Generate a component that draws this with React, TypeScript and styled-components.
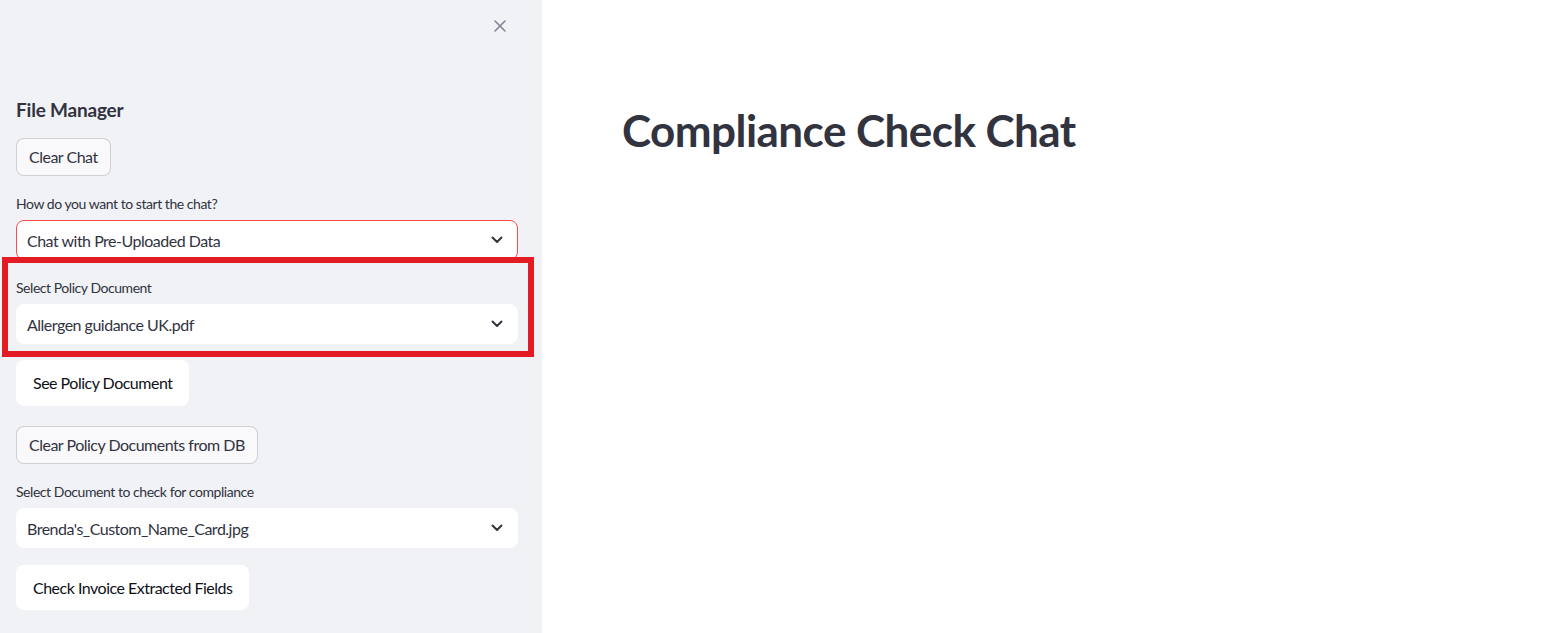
import React from "react";
import styled, { createGlobalStyle } from "styled-components";

const Global = createGlobalStyle`
  html, body { margin: 0; padding: 0; }
  body {
    font-family: Lato, "Noto Sans", sans-serif;
    color: #31333f;
    background: #ffffff;
  }
  * { box-sizing: border-box; }
`;

const Page = styled.div`
  display: flex;
  width: 100%;
  height: 633px;
  overflow: hidden;
`;

const Sidebar = styled.aside`
  position: relative;
  width: 542px;
  flex: 0 0 542px;
  height: 100%;
  background: #f0f2f6;
  display: flex;
  flex-direction: column;
`;

const SidebarHeader = styled.div`
  height: 98px;
  display: flex;
  justify-content: flex-end;
  align-items: flex-start;
  padding: 19px 35px 0 0;
`;

const CloseButton = styled.button`
  width: 14px;
  height: 14px;
  padding: 0;
  border: none;
  background: transparent;
  display: flex;
  align-items: center;
  justify-content: center;
  cursor: pointer;
`;

const SidebarContent = styled.div`
  display: flex;
  flex-direction: column;
  align-items: flex-start;
  gap: 16px;
  padding: 0 24px 0 16px;
`;

const SideHeading = styled.h3`
  margin: 0;
  font-size: 19px;
  font-weight: 700;
  line-height: 24px;
  letter-spacing: -0.2px;
  color: #31333f;
`;

const Button = styled.button<{ $variant?: "outline" | "solid"; $h?: number; $mt?: number }>`
  height: ${(p) => p.$h ?? 38}px;
  margin-top: ${(p) => p.$mt ?? 0}px;
  padding: 0 ${(p) => (p.$variant === "solid" ? 16 : 12)}px;
  border-radius: 8px;
  font-family: inherit;
  font-size: 16px;
  letter-spacing: -0.5px;
  line-height: 1;
  cursor: pointer;
  white-space: nowrap;
  border: ${(p) => (p.$variant === "solid" ? "1px solid transparent" : "1px solid rgba(49, 51, 63, 0.2)")};
  background: ${(p) => (p.$variant === "solid" ? "#ffffff" : "#f9f9fb")};
  color: ${(p) => (p.$variant === "solid" ? "#0e1117" : "#31333f")};
`;

const Field = styled.div`
  width: 100%;
  display: flex;
  flex-direction: column;
`;

const Label = styled.label`
  font-size: 14px;
  line-height: 24px;
  height: 24px;
  margin-bottom: 4px;
  letter-spacing: -0.45px;
  color: #31333f;
`;

const Select = styled.div<{ $focused?: boolean }>`
  width: 100%;
  height: 40px;
  border-radius: 8px;
  background: #ffffff;
  border: 1px solid ${(p) => (p.$focused ? "#ff4b4b" : "#ffffff")};
  display: flex;
  align-items: center;
  justify-content: space-between;
  padding: 0 14px 0 10px;
  font-size: 16px;
  letter-spacing: -0.5px;
  color: #31333f;
`;

const Annotation = styled.div`
  position: absolute;
  left: 2px;
  top: 257px;
  width: 532px;
  height: 100px;
  border: 6px solid #e31c23;
  pointer-events: none;
`;

const Main = styled.main`
  flex: 1;
  background: #ffffff;
  padding: 104px 80px 0 80px;
`;

const Title = styled.h1`
  margin: 0;
  font-size: 44px;
  font-weight: 700;
  line-height: 52px;
  color: #31333f;
  letter-spacing: -0.55px;
`;

const Chevron = () => (
  <svg width="12" height="8" viewBox="0 0 12 8" fill="none">
    <path d="M1.5 1.5 L6 6 L10.5 1.5" stroke="#31333f" strokeWidth="2" strokeLinecap="round" strokeLinejoin="round" />
  </svg>
);

const CloseIcon = () => (
  <svg width="14" height="14" viewBox="0 0 14 14" fill="none">
    <path d="M2 2 L12 12 M12 2 L2 12" stroke="#808495" strokeWidth="1.6" strokeLinecap="round" />
  </svg>
);

export default function App() {
  return (
    <>
      <Global />
      <Page>
        <Sidebar>
          <SidebarHeader>
            <CloseButton aria-label="Close sidebar">
              <CloseIcon />
            </CloseButton>
          </SidebarHeader>
          <SidebarContent>
            <SideHeading>File Manager</SideHeading>
            <Button>Clear Chat</Button>
            <Field>
              <Label>How do you want to start the chat?</Label>
              <Select $focused>
                <span>Chat with Pre-Uploaded Data</span>
                <Chevron />
              </Select>
            </Field>
            <Field>
              <Label>Select Policy Document</Label>
              <Select>
                <span>Allergen guidance UK.pdf</span>
                <Chevron />
              </Select>
            </Field>
            <Button $variant="solid" $h={46}>See Policy Document</Button>
            <Button $mt={4}>Clear Policy Documents from DB</Button>
            <Field>
              <Label>Select Document to check for compliance</Label>
              <Select>
                <span>Brenda's_Custom_Name_Card.jpg</span>
                <Chevron />
              </Select>
            </Field>
            <Button $variant="solid" $h={45} $mt={1}>Check Invoice Extracted Fields</Button>
          </SidebarContent>
          <Annotation />
        </Sidebar>
        <Main>
          <Title>Compliance Check Chat</Title>
        </Main>
      </Page>
    </>
  );
}
